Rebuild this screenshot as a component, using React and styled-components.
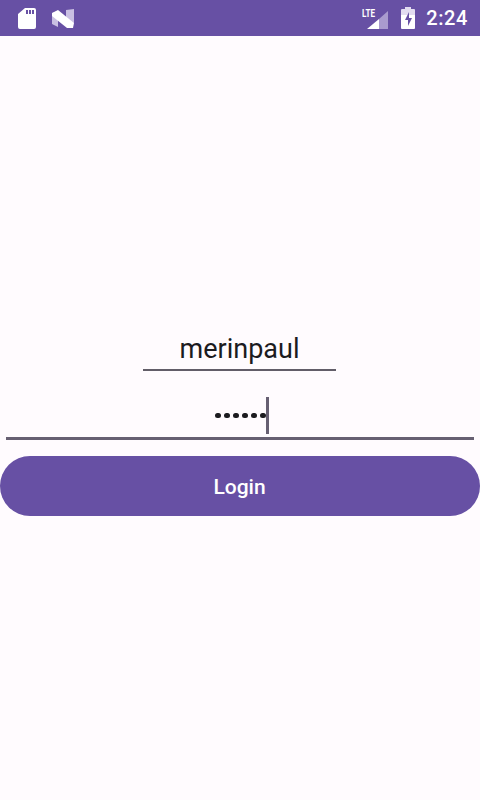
import React from 'react';
import styled, { createGlobalStyle } from 'styled-components';

const GlobalStyle = createGlobalStyle`
  html, body {
    margin: 0;
    padding: 0;
    background: #fffbfe;
  }
`;

const Screen = styled.div`
  display: flex;
  flex-direction: column;
  width: 480px;
  height: 800px;
  overflow: hidden;
  background: #fffbfe;
  font-family: Roboto, sans-serif;
`;

const StatusBar = styled.div`
  display: flex;
  align-items: center;
  justify-content: space-between;
  height: 36px;
  padding: 0 12px 0 18px;
  background: #6750a4;
  color: #fff;
`;

const StatusGroup = styled.div`
  display: flex;
  align-items: center;
  gap: ${(p) => p.$gap}px;
`;

const Clock = styled.span`
  font-size: 20px;
  font-weight: 500;
  letter-spacing: 0.6px;
`;

const Form = styled.div`
  display: flex;
  flex-direction: column;
  align-items: center;
  padding-top: 291px;
`;

const UserField = styled.div`
  box-sizing: border-box;
  width: 193px;
  height: 44px;
  margin-right: 1px;
  padding-top: 1px;
  border-bottom: 2px solid #625d68;
  color: #1c1b1f;
  font-size: 27px;
  line-height: 43px;
  text-align: center;
`;

const PasswordField = styled.div`
  box-sizing: border-box;
  display: flex;
  align-items: center;
  justify-content: center;
  width: 468px;
  height: 69px;
  margin-bottom: 16px;
  padding-top: 23px;
  border-bottom: 3px solid #675f72;
`;

const Dots = styled.div`
  display: flex;
  gap: 3.4px;
  margin-left: 4px;
`;

const Dot = styled.span`
  width: 5.6px;
  height: 5.6px;
  border-radius: 50%;
  background: #1c1b1f;
`;

const Caret = styled.span`
  width: 3px;
  height: 37px;
  background: #675f72;
`;

const LoginButton = styled.button`
  width: 480px;
  height: 60px;
  padding: 2px 1px 0 0;
  border: 0;
  border-radius: 30px;
  background: #6750a4;
  color: #fff;
  font-family: Roboto, sans-serif;
  font-size: 21px;
  font-weight: 500;
`;

const SdIcon = () => (
  <svg width="18" height="21" viewBox="0 0 18 21">
    <path fill="#fff" fillRule="evenodd" d="M7 0h9a2 2 0 0 1 2 2v17a2 2 0 0 1-2 2H2a2 2 0 0 1-2-2V6zM8 2v4h2V2zm3 0v4h2V2zm3 0v4h2V2z" />
  </svg>
);

const NougatIcon = () => (
  <svg width="23" height="19" viewBox="0 0 23 19">
    <path fill="#c9bfe2" d="M0 4l6-1v15l-6-3zM14 1l8-1v14l-8-1z" />
    <path fill="#fff" d="M0 4l6-3 16 13-1 5-6 0L0 7z" />
  </svg>
);

const SignalIcon = () => (
  <svg width="28" height="24" viewBox="0 0 28 24">
    <text x="0" y="11" fill="#fff" fontFamily="Roboto, sans-serif" fontSize="10.5" fontWeight="700" textLength="13" lengthAdjust="spacingAndGlyphs">LTE</text>
    <path fill="#a99bce" d="M17 13L26 5v18h-9z" />
    <path fill="#fff" d="M5 23L17 13v10z" />
  </svg>
);

const BatteryIcon = () => (
  <svg width="14" height="22" viewBox="0 0 14 22">
    <path fill="#e2dcf0" d="M4 0h6v2h3a1 1 0 0 1 1 1v5H0V3a1 1 0 0 1 1-1h3z" />
    <path fill="#fff" d="M0 8h14v13a1 1 0 0 1-1 1H1a1 1 0 0 1-1-1z" />
    <path fill="#6750a4" d="M8 5L4 13h3v6l4-8H8z" />
  </svg>
);

export default function App() {
  return (
    <Screen>
      <GlobalStyle />
      <StatusBar>
        <StatusGroup $gap={16}>
          <SdIcon />
          <NougatIcon />
        </StatusGroup>
        <StatusGroup $gap={11}>
          <SignalIcon />
          <BatteryIcon />
          <Clock>2:24</Clock>
        </StatusGroup>
      </StatusBar>
      <Form>
        <UserField>merinpaul</UserField>
        <PasswordField>
          <Dots>
            {[0, 1, 2, 3, 4, 5].map((i) => (
              <Dot key={i} />
            ))}
          </Dots>
          <Caret />
        </PasswordField>
        <LoginButton>Login</LoginButton>
      </Form>
    </Screen>
  );
}
